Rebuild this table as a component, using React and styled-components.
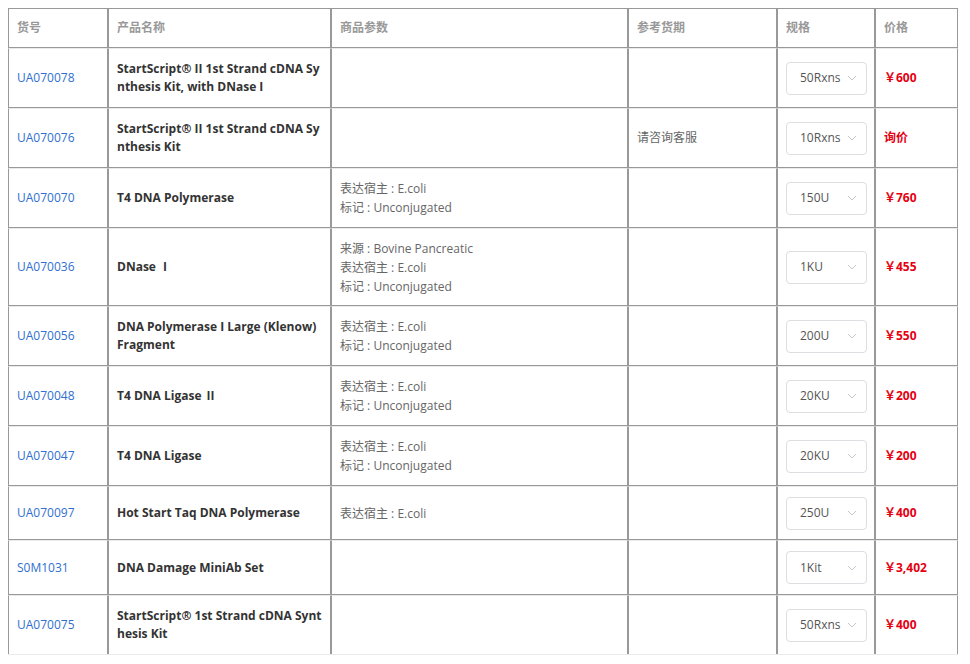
import React from "react";
import styled, { createGlobalStyle } from "styled-components";

const Global = createGlobalStyle`
  html, body { margin: 0; padding: 0; background: #fff; }
  body {
    padding: 8px;
    font-family: "Open Sans", "Noto Sans CJK SC", sans-serif;
    font-size: 12px;
    color: #333;
  }
`;

const Frame = styled.div`
  width: 950px;
  height: 646px;
  overflow: hidden;
  border-bottom: 1px solid #e8eaec;
`;

const Table = styled.table`
  width: 950px;
  table-layout: fixed;
  border-collapse: separate;
  border-spacing: 0;
`;

const Cell = styled.td`
  box-sizing: border-box;
  border-left: 1px solid #999;
  border-right: 1px solid #999;
  border-top: 1px solid #e8eaec;
  border-bottom: 1px solid #999;
  padding: 9px 8px;
  vertical-align: middle;
  text-align: left;
  line-height: 18px;
  word-break: break-all;
`;

const Head = styled(Cell).attrs({ as: "th" })`
  border-top: 1px solid #999;
  height: 40px;
  color: #999;
  font-weight: 700;
  padding: 0 8px;
`;

const Code = styled.span`
  color: #2f6fd0;
`;

const Name = styled.span`
  font-weight: 700;
  color: #333;
`;

const Params = styled.div`
  color: #666;
  line-height: 19px;
`;

const Lead = styled.span`
  color: #666;
`;

const Select = styled.div`
  box-sizing: border-box;
  width: 81px;
  height: 33px;
  border: 1px solid #dcdee2;
  border-radius: 4px;
  display: flex;
  align-items: center;
  justify-content: space-between;
  padding: 0 9px 0 13px;
  color: #555;
  font-size: 12px;
`;

const Price = styled.span`
  color: #e60012;
  font-weight: 700;
`;

const Chevron = () => (
  <svg width="10" height="6" viewBox="0 0 10 6" fill="none">
    <path d="M1 1l4 4 4-4" stroke="#c5c8ce" strokeWidth="1" />
  </svg>
);

const rows = [
  { code: "UA070078", name: "StartScript® II 1st Strand cDNA Synthesis Kit, with DNase I", params: [], lead: "", spec: "50Rxns", price: "￥600", h: 60 },
  { code: "UA070076", name: "StartScript® II 1st Strand cDNA Synthesis Kit", params: [], lead: "请咨询客服", spec: "10Rxns", price: "询价", h: 60 },
  { code: "UA070070", name: "T4 DNA Polymerase", params: ["表达宿主 : E.coli", "标记 : Unconjugated"], lead: "", spec: "150U", price: "￥760", h: 60 },
  { code: "UA070036", name: "DNase Ⅰ", params: ["来源 : Bovine Pancreatic", "表达宿主 : E.coli", "标记 : Unconjugated"], lead: "", spec: "1KU", price: "￥455", h: 78 },
  { code: "UA070056", name: "DNA Polymerase I Large (Klenow) Fragment", params: ["表达宿主 : E.coli", "标记 : Unconjugated"], lead: "", spec: "200U", price: "￥550", h: 60 },
  { code: "UA070048", name: "T4 DNA Ligase Ⅱ", params: ["表达宿主 : E.coli", "标记 : Unconjugated"], lead: "", spec: "20KU", price: "￥200", h: 60 },
  { code: "UA070047", name: "T4 DNA Ligase", params: ["表达宿主 : E.coli", "标记 : Unconjugated"], lead: "", spec: "20KU", price: "￥200", h: 60 },
  { code: "UA070097", name: "Hot Start Taq DNA Polymerase", params: ["表达宿主 : E.coli"], lead: "", spec: "250U", price: "￥400", h: 54 },
  { code: "S0M1031", name: "DNA Damage MiniAb Set", params: [], lead: "", spec: "1Kit", price: "￥3,402", h: 55 },
  { code: "UA070075", name: "StartScript® 1st Strand cDNA Synthesis Kit", params: [], lead: "", spec: "50Rxns", price: "￥400", h: 60 },
];

const Row = styled.tr`
  height: ${(p) => p.$h}px;
`;

export default function App() {
  return (
    <>
      <Global />
      <Frame>
        <Table>
          <colgroup>
            <col style={{ width: 100 }} />
            <col style={{ width: 223 }} />
            <col style={{ width: 297 }} />
            <col style={{ width: 149 }} />
            <col style={{ width: 98 }} />
            <col style={{ width: 83 }} />
          </colgroup>
          <thead>
            <tr>
              <Head>货号</Head>
              <Head>产品名称</Head>
              <Head>商品参数</Head>
              <Head>参考货期</Head>
              <Head>规格</Head>
              <Head>价格</Head>
            </tr>
          </thead>
          <tbody>
            {rows.map((r) => (
              <Row key={r.code} $h={r.h}>
                <Cell><Code>{r.code}</Code></Cell>
                <Cell><Name>{r.name}</Name></Cell>
                <Cell>
                  <Params>
                    {r.params.map((p) => (
                      <div key={p}>{p}</div>
                    ))}
                  </Params>
                </Cell>
                <Cell><Lead>{r.lead}</Lead></Cell>
                <Cell>
                  <Select>
                    <span>{r.spec}</span>
                    <Chevron />
                  </Select>
                </Cell>
                <Cell><Price>{r.price}</Price></Cell>
              </Row>
            ))}
          </tbody>
        </Table>
      </Frame>
    </>
  );
}
